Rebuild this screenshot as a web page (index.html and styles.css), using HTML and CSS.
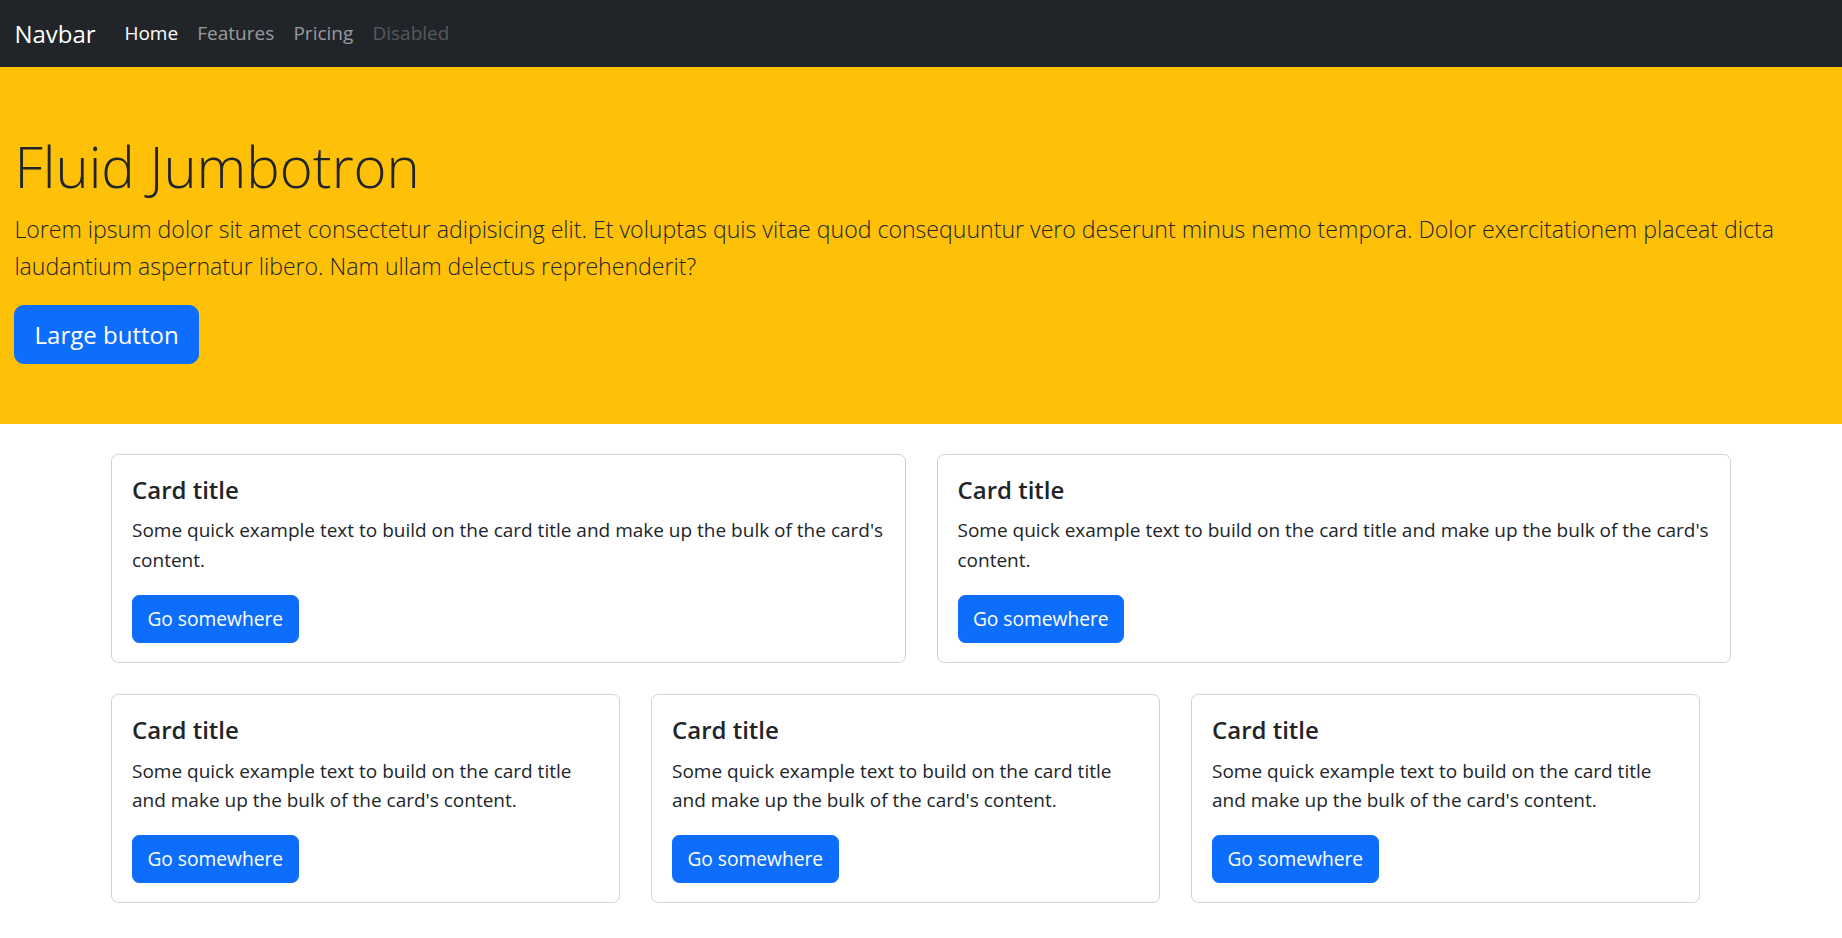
FILE: index.html
```html
<!DOCTYPE html>
<html lang="en">
<head>
<meta charset="utf-8">
<title>Fluid Jumbotron</title>
<link rel="stylesheet" href="styles.css">
</head>
<body>
<nav class="navbar">
  <a class="brand" href="#">Navbar</a>
  <ul class="nav">
    <li><a class="nav-link active" href="#">Home</a></li>
    <li><a class="nav-link" href="#">Features</a></li>
    <li><a class="nav-link" href="#">Pricing</a></li>
    <li><a class="nav-link disabled" href="#">Disabled</a></li>
  </ul>
</nav>

<header class="hero">
  <h1 class="hero-title">Fluid Jumbotron</h1>
  <p class="lead">Lorem ipsum dolor sit amet consectetur adipisicing elit. Et voluptas quis vitae quod consequuntur vero deserunt minus nemo tempora. Dolor exercitationem placeat dicta laudantium aspernatur libero. Nam ullam delectus reprehenderit?</p>
  <div class="hero-actions">
    <a class="btn btn-lg" href="#">Large button</a>
  </div>
</header>

<main class="cards">
  <div class="card-row two">
    <div class="card">
      <h5 class="card-title">Card title</h5>
      <p class="card-text">Some quick example text to build on the card title and make up the bulk of the card's content.</p>
      <div class="card-actions"><a class="btn" href="#">Go somewhere</a></div>
    </div>
    <div class="card">
      <h5 class="card-title">Card title</h5>
      <p class="card-text">Some quick example text to build on the card title and make up the bulk of the card's content.</p>
      <div class="card-actions"><a class="btn" href="#">Go somewhere</a></div>
    </div>
  </div>
  <div class="card-row three">
    <div class="card">
      <h5 class="card-title">Card title</h5>
      <p class="card-text">Some quick example text to build on the card title and make up the bulk of the card's content.</p>
      <div class="card-actions"><a class="btn" href="#">Go somewhere</a></div>
    </div>
    <div class="card">
      <h5 class="card-title">Card title</h5>
      <p class="card-text">Some quick example text to build on the card title and make up the bulk of the card's content.</p>
      <div class="card-actions"><a class="btn" href="#">Go somewhere</a></div>
    </div>
    <div class="card">
      <h5 class="card-title">Card title</h5>
      <p class="card-text">Some quick example text to build on the card title and make up the bulk of the card's content.</p>
      <div class="card-actions"><a class="btn" href="#">Go somewhere</a></div>
    </div>
  </div>
</main>
</body>
</html>
```

FILE: styles.css
```css
* {
  box-sizing: border-box;
}

body {
  margin: 0;
  font-family: "Open Sans", "Noto Sans", sans-serif;
  font-size: 19.2px;
  line-height: 1.5;
  color: #212529;
  background: #fff;
}

/* Navbar */
.navbar {
  display: flex;
  align-items: center;
  height: 67px;
  padding: 0 14.4px;
  background: #212529;
}

.brand {
  font-size: 24px;
  line-height: 36px;
  color: #fff;
  text-decoration: none;
  margin-right: 19.2px;
}

.nav {
  display: flex;
  list-style: none;
  margin: 0;
  padding: 0;
}

.nav-link {
  display: block;
  padding: 0 9.6px;
  font-size: 19px;
  line-height: 28.8px;
  color: rgba(255, 255, 255, 0.55);
  text-decoration: none;
}

.nav-link.active {
  color: #fff;
}

.nav-link.disabled {
  color: rgba(255, 255, 255, 0.25);
}

/* Hero */
.hero {
  background: #ffc107;
  padding: 65.4px 14.4px 60px;
}

.hero-title {
  margin: 0 0 9.5px;
  font-size: 56.3px;
  font-weight: 300;
  line-height: 69.12px;
}

.lead {
  margin: 0 0 19.5px;
  font-size: 23.1px;
  font-weight: 300;
  line-height: 37px;
}

.hero-actions,
.card-actions {
  display: flex;
}

.btn {
  display: inline-block;
  background: #0d6efd;
  color: #fff;
  border: 1px solid #0d6efd;
  text-decoration: none;
  font-size: 19.2px;
  line-height: 28.8px;
  padding: 8.4px 14.4px;
  border-radius: 7.2px;
}

.btn-lg {
  font-size: 24px;
  line-height: 37px;
  padding: 10px 19.2px;
  border-radius: 9.6px;
}

/* Cards */
.cards {
  width: 1620px;
  margin: 30px auto 0;
  display: flex;
  flex-direction: column;
  gap: 31px;
}

.card-row {
  display: grid;
  gap: 31px;
}

.card-row.two {
  grid-template-columns: 1fr 1fr;
}

.card-row.three {
  grid-template-columns: repeat(3, 509px);
}

.card {
  border: 1px solid rgba(0, 0, 0, 0.175);
  border-radius: 7.2px;
  padding: 21px 20px 19px;
}

.card-row.two .card {
  padding-right: 8px;
}

.card-title {
  margin: 0 0 12px;
  font-size: 24px;
  font-weight: 600;
  line-height: 28.8px;
}

.card-text {
  margin: 0 0 20px;
  font-size: 19px;
  line-height: 29.4px;
}
```
